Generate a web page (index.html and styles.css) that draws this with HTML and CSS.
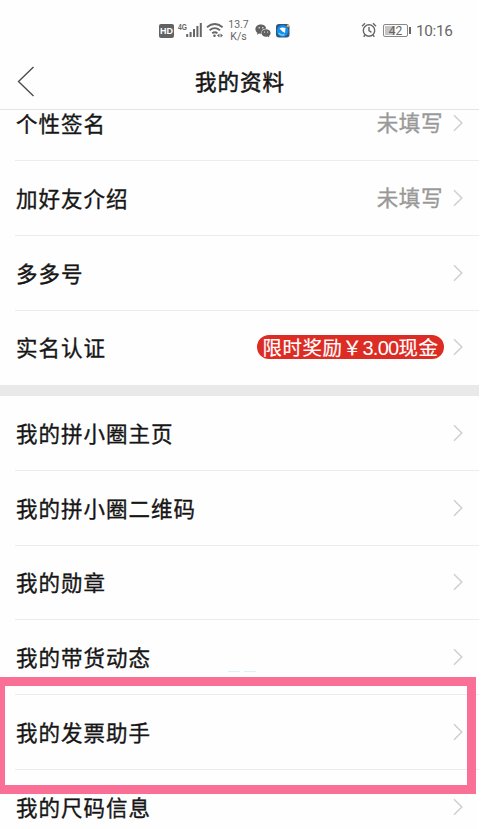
FILE: index.html
```html
<!DOCTYPE html>
<html lang="zh-CN">
<head>
<meta charset="utf-8">
<title>我的资料</title>
<link rel="stylesheet" href="styles.css">
</head>
<body>
<svg class="defs" width="0" height="0"><symbol id="chevron" viewBox="0 0 10 18"><path d="M1 1.2 8.800 9 1 16.800" fill="none" stroke="currentColor" stroke-width="1.500"/></symbol></svg>
<div class="screen">
  <div class="status">
    <span class="hd">HD</span>
    <svg class="signal" width="25" height="18" viewBox="0 0 25 18"><text x="0" y="8.500" class="net" textLength="9" lengthAdjust="spacingAndGlyphs">4G</text><path d="M9.200 13v3M12.600 11v5M16 8v8M19.400 5v11M22.800 2v14" stroke="#666" stroke-width="2"/></svg>
    <svg class="wifi" width="19" height="17" viewBox="0 0 19 17"><g fill="none" stroke="#666" stroke-width="1.800"><path d="M1 5.200Q8.700-1.200 16.600 5.200"/><path d="M3.600 8.300Q8.800 4 14 8.300"/><path d="M6.200 11.300Q8.800 9.200 11.400 11.300"/></g><circle cx="8.500" cy="13.700" r="1.300" fill="#666"/><path d="M13.500 11.500v4l-2.500-2zM14.500 11.500v4l2.500-2z" fill="#666"/></svg>
    <div class="speed"><span>13.7</span><span>K/s</span></div>
    <svg class="wechat" width="16" height="14" viewBox="0 0 16 14"><path d="M6 .6C2.800.6.400 2.600.400 5.200c0 1.500.8 2.800 2 3.600l-.5 1.900 2.200-1.100c.7.2 1.400.2 2.300.2C6 6.700 8 4.700 11.300 4.600 10.800 2.200 8.700.6 6 .6z" fill="#626262"/><path d="M11 5.200c-2.600 0-4.500 1.700-4.500 3.800s2 3.800 4.500 3.800c.6 0 1.100-.1 1.600-.2l1.700.9-.4-1.500c1-.7 1.700-1.800 1.700-3 0-2.100-2-3.800-4.600-3.800z" fill="#626262"/><g fill="#fff"><circle cx="4.200" cy="3.800" r=".7"/><circle cx="7.800" cy="3.800" r=".7"/><circle cx="9.500" cy="8" r=".6"/><circle cx="12.600" cy="8" r=".6"/></g></svg>
    <svg class="app" width="14" height="14" viewBox="0 0 14 14"><rect width="13.500" height="13.500" rx="3" fill="#31577c"/><circle cx="6.700" cy="6.900" r="5.800" fill="#168eea"/><path d="M3.500 4.600Q6 2.500 9.500 4L9 9 6.200 7.300z" fill="#fff"/><path d="M2.500 9Q5 12 8.500 10.500" stroke="#65d3fa" stroke-width="1.500" fill="none"/><circle cx="11.900" cy="2" r="1.300" fill="#edae35"/></svg>
    <svg class="alarm" width="16" height="16" viewBox="0 0 16 16"><g fill="none" stroke="#666" stroke-width="1.400"><circle cx="8" cy="8.500" r="5.700"/><path d="M8 5v3.700l2.500 1.600M1 4.200 4 1.300M12 1.300l3 2.900M4 13l-1.300 1.700M12 13l1.300 1.700"/></g></svg>
    <span class="battery">42</span>
    <span class="clock">10:16</span>
  </div>
  <header class="bar">
    <svg class="back" width="18" height="31" viewBox="0 0 18 31"><path d="M16.500 1 1.500 15.500l15 14.500" fill="none" stroke="#4d4d4d" stroke-width="1.400"/></svg>
    <h1>我的资料</h1>
  </header>
  <main class="viewport">
    <div class="group first">
      <div class="row"><span class="label">个性签名</span><span class="value">未填写</span><svg class="go"><use href="#chevron"/></svg></div>
      <div class="row"><span class="label">加好友介绍</span><span class="value">未填写</span><svg class="go"><use href="#chevron"/></svg></div>
      <div class="row"><span class="label">多多号</span><svg class="go"><use href="#chevron"/></svg></div>
      <div class="row"><span class="label">实名认证</span><span class="reward">限时奖励￥<span class="amount">3.00</span>现金</span><svg class="go"><use href="#chevron"/></svg></div>
    </div>
    <div class="group">
      <div class="row"><span class="label">我的拼小圈主页</span><svg class="go"><use href="#chevron"/></svg></div>
      <div class="row"><span class="label">我的拼小圈二维码</span><svg class="go"><use href="#chevron"/></svg></div>
      <div class="row"><span class="label">我的勋章</span><svg class="go"><use href="#chevron"/></svg></div>
      <div class="row marks"><span class="label">我的带货动态</span><svg class="go"><use href="#chevron"/></svg></div>
      <div class="row marked"><span class="label">我的发票助手</span><svg class="go"><use href="#chevron"/></svg></div>
      <div class="row"><span class="label">我的尺码信息</span><svg class="go"><use href="#chevron"/></svg></div>
    </div>
  </main>
</div>
</body>
</html>
```
FILE: styles.css
```css
*, *::before, *::after { box-sizing: border-box; }
body {
  margin: 0;
  background: #fff;
  color: #161616;
  font-family: "Liberation Sans", "Noto Sans CJK SC", sans-serif;
}
.defs { position: absolute; }
.screen {
  display: flex;
  flex-direction: column;
  width: 479px;
  height: 829px;
  overflow: hidden;
  background: #fefefe;
}
.status {
  display: flex;
  align-items: center;
  flex: none;
  height: 53px;
  padding: 8px 26px 0 159px;
  color: #666;
  font-family: Roboto, sans-serif;
}
.status > * { flex: none; }
.hd {
  width: 15px;
  height: 14px;
  border-radius: 2px;
  background: #626262;
  color: #fff;
  font: bold 9px/14px "Liberation Sans", sans-serif;
  text-align: center;
}
.signal { margin: -2px 0 0 4px; }
.net { font: bold 9.5px "Liberation Sans", sans-serif; fill: #666; }
.wifi { margin-left: 3px; }
.speed {
  display: flex;
  flex-direction: column;
  width: 23px;
  margin-left: 2px;
  padding-top: 1px;
  font-size: 10.5px;
  line-height: 12.5px;
  text-align: center;
}
.wechat { margin-left: 5px; }
.app { margin-left: 5px; }
.alarm { margin: -1px 0 0 auto; }
.battery {
  position: relative;
  width: 25px;
  height: 13px;
  margin-left: 6px;
  padding: 1px;
  border: 1px solid #888;
  border-radius: 2px;
  background: linear-gradient(90deg, #c4c4c4 10px, #fff 10px) content-box;
  font-size: 12px;
  line-height: 10px;
  text-align: center;
}
.battery::after {
  content: "";
  position: absolute;
  top: 2px;
  right: -4px;
  width: 2px;
  height: 7px;
  background: #666;
}
.clock {
  width: 37px;
  margin-left: 8px;
  font-size: 15.3px;
  line-height: 18px;
  letter-spacing: -.3px;
  white-space: nowrap;
}
.bar {
  display: grid;
  grid-template-columns: 60px 1fr 60px;
  align-items: center;
  flex: none;
  height: 57px;
  border-bottom: 1px solid #e4e4e4;
}
.back { margin-left: 17px; }
.bar h1 {
  margin: 0;
  padding: 4px 0 0 1px;
  font-size: 21.5px;
  font-weight: 400;
  line-height: 30px;
  letter-spacing: 1px;
  text-align: center;
  -webkit-text-stroke: .5px;
}
.viewport { flex: 1; min-height: 0; overflow: hidden; }
.group.first { margin-top: -23.5px; border-bottom: 11px solid #e9e9e9; }
.row {
  position: relative;
  display: flex;
  align-items: center;
  height: 74.7px;
  margin-left: 15px;
  padding: 0 16px 0 1px;
  border-bottom: 1px solid #ececec;
  font-size: 21.5px;
  line-height: 30px;
  white-space: nowrap;
  -webkit-text-stroke: .35px;
}
.row:last-child { border-bottom-color: transparent; }
.label { padding-top: 4px; letter-spacing: 1px; }
.go {
  width: 10px;
  height: 18px;
  margin-left: auto;
  color: #cfcfcf;
  -webkit-text-stroke: 0;
}
.value { margin-left: auto; padding-top: 1px; color: #999; letter-spacing: .6px; }
.value + .go { margin-left: 10px; }
.reward + .go { margin-left: 9px; }
.reward {
  display: flex;
  align-items: center;
  justify-content: center;
  width: 187px;
  height: 24px;
  margin-left: auto;
  padding-top: 1px;
  border-radius: 12px;
  background: #dc2c23;
  color: #fff;
  font-size: 19.4px;
  line-height: 24px;
  letter-spacing: .6px;
  -webkit-text-stroke: .2px;
}
.amount { font-size: 20px; letter-spacing: -.7px; -webkit-text-stroke: 0; }
.marks::before, .marks::after {
  content: "";
  position: absolute;
  top: 51px;
  left: 213px;
  width: 12px;
  height: 1px;
  background: #dff2f6;
}
.marks::after { left: 229px; }
.marked::after {
  content: "";
  position: absolute;
  z-index: 1;
  top: -17.7px;
  left: -15px;
  width: 476px;
  height: 116.5px;
  border: 9px solid #f96f96;
  border-left-width: 5px;
}
```
